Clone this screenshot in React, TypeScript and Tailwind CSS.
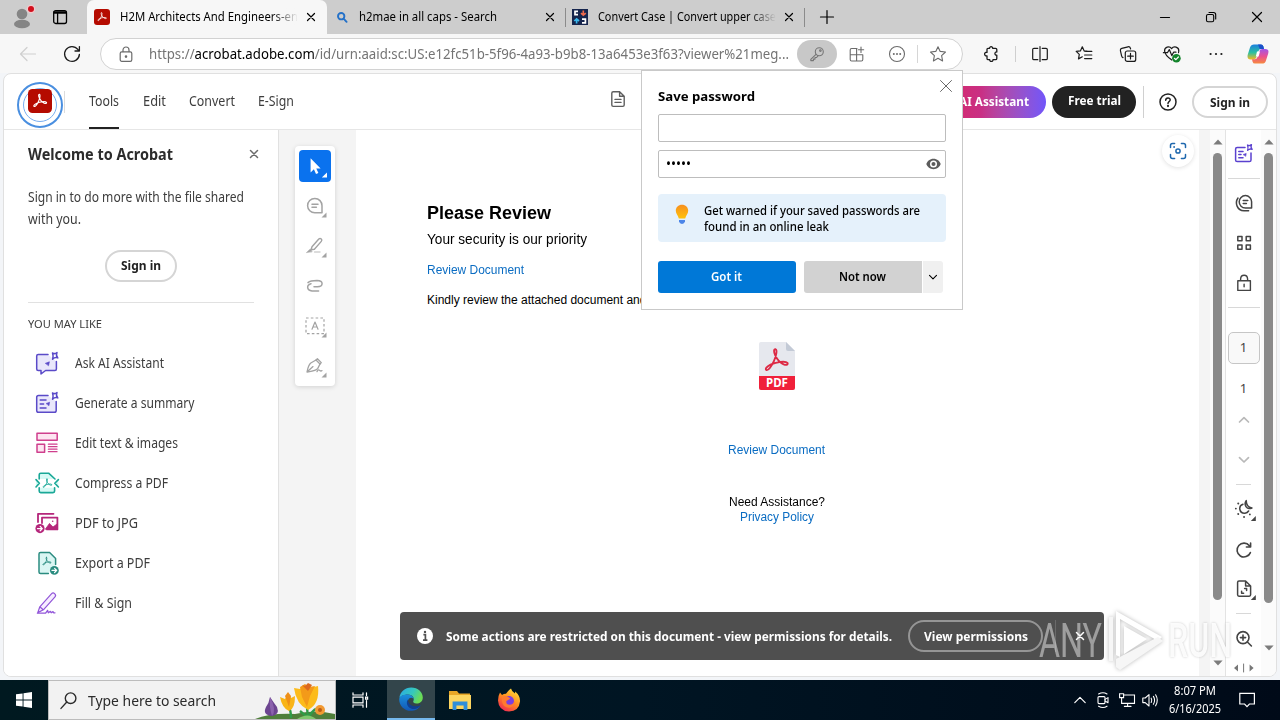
import { useLayoutEffect, useRef, useState } from "react";
import type { ReactNode } from "react";

const ui = "font-['Noto_Sans',sans-serif]";

/* Single-line label that is condensed or widened to an exact width. */
function Fit({ w, className = "", children }: { w: number; className?: string; children: ReactNode }) {
  const ref = useRef<HTMLSpanElement>(null);
  const [k, setK] = useState(1);
  useLayoutEffect(() => {
    const el = ref.current;
    if (!el) return;
    el.style.transform = "none";
    setK(w / el.getBoundingClientRect().width);
  }, [w]);
  return (
    <span className={`block shrink-0 whitespace-nowrap ${className}`} style={{ width: w }}>
      <span ref={ref} className="inline-block origin-left" style={{ transform: `scaleX(${k})` }}>
        {children}
      </span>
    </span>
  );
}

function Ic({ s = 20, c = "", sw = 1.2, children }: { s?: number; c?: string; sw?: number; children: ReactNode }) {
  return (
    <svg width={s} height={s} viewBox={`0 0 ${s} ${s}`} fill="none" stroke="currentColor" strokeWidth={sw} strokeLinecap="round" strokeLinejoin="round" className={`block shrink-0 overflow-visible ${c}`}>
      {children}
    </svg>
  );
}

const X = ({ s = 10, c = "", sw = 1.2 }: { s?: number; c?: string; sw?: number }) => (
  <Ic s={s} c={c} sw={sw}><path d={`M.5 .5L${s - 0.5} ${s - 0.5}M${s - 0.5} .5L.5 ${s - 0.5}`} /></Ic>
);

/* Three-lobed Acrobat mark on a 24 unit grid. */
const acro = "M11.3 3.6C9.6 3.2 9.8 6 11 8.6C12.4 11.6 14.7 14.5 17.8 15.8C20.4 16.8 21.6 15.7 20.8 14.6C19.4 12.8 12.2 13.8 7.6 15.8C4 17.4 2.6 19.6 3.8 20.3C5.4 21.2 8.2 17 10 13C11.6 9.4 12.9 4.1 11.3 3.6Z";

const AcroTile = ({ s }: { s: number }) => (
  <svg width={s} height={s} viewBox="0 0 24 24" className="block shrink-0">
    <rect width="24" height="24" rx="4.5" fill="#b50b00" />
    <g transform="translate(3.4 2.8) scale(.72)"><path d={acro} fill="none" stroke="#fff" strokeWidth="1.6" /></g>
  </svg>
);

function TabBar() {
  return (
    <div className="flex h-[34px] shrink-0 items-center bg-[#cdcdcd] text-black">
      <div className="flex w-[44px] justify-center">
        <Ic s={24} sw={0}>
          <circle cx="12" cy="9" r="5.3" fill="#858585" />
          <ellipse cx="12" cy="19" rx="8" ry="4.3" fill="#858585" />
          <circle cx="21" cy="4" r="4.3" fill="#f3c9cc" />
          <circle cx="21" cy="4" r="3" fill="#d1101d" />
        </Ic>
      </div>
      <div className="flex w-[43px] pl-[9px]">
        <Ic s={14} sw={1.3}><rect x=".7" y=".7" width="12.8" height="12.8" rx="2" /><path d="M1 3.2H13M1 2H13M4.6 4V13" /></Ic>
      </div>
      <div className="flex h-full w-[240px] items-center rounded-t-[7px] bg-[#f7f7f7] pl-[7px]">
        <AcroTile s={16} />
        <div className="relative ml-[10px]">
          <Fit w={178} className="text-[12px] leading-[18px]">H2M Architects And Engineers-en</Fit>
          <div className="absolute inset-y-0 right-0 w-[26px] bg-gradient-to-r from-transparent to-[#f7f7f7]" />
        </div>
        <X s={8} c="ml-[9px]" />
      </div>
      <div className="flex h-full w-[238px] items-center pl-[10px]">
        <Ic s={11} c="text-[#2471c8]" sw={1.9}><circle cx="4.2" cy="4.2" r="3.2" /><path d="M6.8 6.8L9.6 9.8" /></Ic>
        <Fit w={138} className="ml-[11px] text-[12px] leading-[18px]">h2mae in all caps - Search</Fit>
        <X s={8} c="ml-[49px]" />
      </div>
      <div className="h-[19px] w-px bg-[#8b8b8b]" />
      <div className="flex h-full w-[238px] items-center pl-[6px]">
        <svg width="16" height="16" viewBox="0 0 16 16" className="block shrink-0">
          <rect width="16" height="16" fill="#16254d" />
          <g fill="none" strokeWidth="1.7">
            <path d="M6 2.3H3V5.7H6" stroke="#fff" /><path d="M11.3 1.5V6M9 4.2L11.3 6.2L13.8 4.2" stroke="#ef6a4c" />
            <path d="M4.6 14.5V10M2.3 12L4.6 9.8L7 12" stroke="#3bb8ee" /><path d="M10 10.2H13.4V13.8H10" stroke="#fff" />
          </g>
        </svg>
        <div className="relative ml-[10px]">
          <Fit w={178} className="text-[12px] leading-[18px]">Convert Case | Convert upper case</Fit>
          <div className="absolute inset-y-0 right-0 w-[26px] bg-gradient-to-r from-transparent to-[#cdcdcd]" />
        </div>
        <X s={8} c="ml-[9px]" />
      </div>
      <div className="h-[19px] w-px bg-[#8b8b8b]" />
      <Ic s={14} c="ml-[15px]"><path d="M7 .5V13.5M.5 7H13.5" /></Ic>
      <div className="ml-auto flex">
        <div className="flex w-[46px] items-center justify-center"><Ic s={10}><path d="M.5 5.5H9.5" /></Ic></div>
        <div className="flex w-[46px] items-center justify-center"><Ic s={10} sw={1.1}><rect x=".5" y="2.5" width="7.2" height="7.2" rx="1.5" /><path d="M3 .5H7.5Q9.7 .5 9.7 2.7V7" /></Ic></div>
        <div className="flex w-[46px] items-center justify-center"><X s={10} /></div>
      </div>
    </div>
  );
}

const Slot = ({ children, w = "w-[44px]" }: { children: ReactNode; w?: string }) => (
  <div className={`flex shrink-0 items-center justify-center ${w}`}>{children}</div>
);

function AddressBar() {
  return (
    <div className="flex h-[39px] shrink-0 items-center bg-[#f7f7f7] pl-[6px] text-[#1b1b1b]">
      <Slot><Ic s={16} c="text-[#cfcfcf]"><path d="M15.5 8H.8M7 1.5L.5 8L7 14.5" /></Ic></Slot>
      <Slot><Ic s={18} sw={1.3}><path d="M16.4 9.4A7.4 7.4 0 1 1 14.8 4.4L16.2 6M16.4 1.6V6H12" /></Ic></Slot>
      <div className="ml-[6px] flex h-[32px] w-[863px] shrink-0 items-center rounded-full border border-[#d2d2d2] bg-white text-[#6b6b6b]">
        <Ic s={14} c="ml-[18px]"><rect x="1.2" y="4.8" width="11.6" height="9.6" rx="1.6" /><path d="M4 4.6V3A3 3 0 0 1 10 3V4.6" /><circle cx="7" cy="9.6" r=".7" fill="currentColor" /></Ic>
        <Fit w={640} className="ml-[16px] text-[13.5px] leading-[20px] text-[#747474]">
          https://<span className="text-black">acrobat.adobe.com</span>/id/urn:aaid:sc:US:e12fc51b-5f96-4a93-b9b8-13a6453e3f63?viewer%21meg...
        </Fit>
        <div className="ml-[8px] flex h-[28px] w-[40px] shrink-0 items-center justify-center rounded-full bg-[#c8c8c8]">
          <Ic s={14} c="text-[#767676]" sw={1.1}><circle cx="9.3" cy="4.7" r="4" /><circle cx="10.4" cy="3.6" r=".8" /><path d="M6 7.3L.8 12.3V13.6H3.4V12.1H5V10.5H6.6L8 8.8" /></Ic>
        </div>
        <Slot w="w-[40px]"><Ic s={16} sw={1.1}><path d="M8 2.5H2.6Q1.2 2.5 1.2 3.9V13.6Q1.2 15 2.6 15H12.4Q13.8 15 13.8 13.6V9M1.2 8.8H13.8M7.6 2.5V15M12 1V6.4M9.3 3.7H14.7" /></Ic></Slot>
        <Slot w="w-[40px]"><Ic s={16} sw={1.1}><circle cx="8" cy="8" r="7.5" /><g fill="currentColor" stroke="none"><circle cx="4.8" cy="8" r="1" /><circle cx="8" cy="8" r="1" /><circle cx="11.2" cy="8" r="1" /></g></Ic></Slot>
        <div className="h-[18px] w-px bg-[#d6d6d6]" />
        <Slot w="w-[40px]"><Ic s={16} sw={1.1}><path d="M8 .7L10.2 5.4L15.5 6L11.6 9.6L12.6 14.9L8 12.3L3.4 14.9L4.4 9.6L.5 6L5.8 5.4Z" /></Ic></Slot>
      </div>
      <div className="ml-[6px] flex items-center">
        <Slot><Ic s={16} sw={1.3}><path d="M5 2.3H6.6C6.3 .2 10 .2 9.7 2.3H12.6Q13.8 2.3 13.8 3.5V6C11.3 5.5 11.3 9.6 13.8 9.1V12.4Q13.8 13.6 12.6 13.6H10C10.3 15.9 6.4 15.9 6.7 13.6H5.2Q4 13.6 4 12.4V9.8C.8 10.3 .8 5.8 4 6.3V3.3Q4 2.3 5 2.3Z" /></Ic></Slot>
        <div className="mx-[2px] h-[16px] w-px bg-[#cfcfcf]" />
        <Slot><Ic s={16}><path d="M5.8 2.3H2Q.7 2.3 .7 3.6V12.4Q.7 13.7 2 13.7H5.8M10.2 2.3H14Q15.3 2.3 15.3 3.6V12.4Q15.3 13.7 14 13.7H10.2M8 .6V15.4" /></Ic></Slot>
        <Slot><Ic s={16}><path d="M8.6 5.2H11L8.2 4.9L6.3 .8L4.4 4.9L.2 5.4L3.3 8.4L2.5 12.9L6.3 10.8M9.8 5.4H15.8M8.6 9H15.8M8.6 12.6H15.8" /></Ic></Slot>
        <Slot><Ic s={16}><rect x="5.3" y="5" width="10.4" height="10.4" rx="2" /><path d="M10.5 7.4V13M7.7 10.2H13.3M3 11.6Q2 11.2 1.6 9.8L.4 4.6Q0 2.8 1.8 2.3L8 .8Q9.8 .4 10.4 2.2L10.6 3" /></Ic></Slot>
        <Slot><Ic s={18}><path d="M8.6 3.6C6.4 .6 1.2 2 1.6 6C1.8 9.6 5 12.4 8.8 15M8.6 3.6C10.8 .6 16 2 15.8 6L15.5 7.6M.4 7.7H4.4L6.3 4.6L8.8 10.6L10.6 7.2H13" /><circle cx="13.4" cy="13.2" r="4.3" fill="#13842b" stroke="none" /><path d="M11.4 13.3L12.9 14.7L15.4 12" stroke="#fff" /></Ic></Slot>
        <Slot><Ic s={14} sw={0}><g fill="currentColor"><circle cx="1.6" cy="7" r="1.1" /><circle cx="7" cy="7" r="1.1" /><circle cx="12.4" cy="7" r="1.1" /></g></Ic></Slot>
        <Slot w="w-[40px]">
          <svg width="22" height="20" viewBox="0 0 22 20" className="block">
            <defs>
              <linearGradient id="cpA" x1="0" y1="0" x2="0" y2="1"><stop offset="0" stopColor="#1a7fe0" /><stop offset=".55" stopColor="#2cc0a0" /><stop offset="1" stopColor="#f5b921" /></linearGradient>
              <linearGradient id="cpB" x1="0" y1="0" x2="0" y2="1"><stop offset="0" stopColor="#a156e8" /><stop offset=".5" stopColor="#ea5092" /><stop offset="1" stopColor="#f78a3c" /></linearGradient>
            </defs>
            <path d="M7 .4H14Q15.8 .4 16.4 2.6L17 5H14Q12 5 11.3 7.4L9.6 13Q8.8 15.4 6.6 15.4H3.6Q-.4 15.4 .8 10.6L3 3.6Q4 .4 7 .4Z" fill="url(#cpA)" />
            <path d="M11 .4H14Q15.8 .4 16.4 2.6L17 5H12.8Z" fill="#1b50c9" />
            <path d="M15 19.6H8Q6 19.6 5.5 17.4L5 15.2H8Q10 15.2 10.8 12.6L12.4 7Q13.1 5 15.4 5H18.4Q22.4 5 21.2 9.4L19 16.4Q18 19.6 15 19.6Z" fill="url(#cpB)" />
            <path d="M10 7.6H13L11.6 12.6H8.8Z" fill="#fff" />
          </svg>
        </Slot>
      </div>
    </div>
  );
}

function AppHeader() {
  const t = `text-[13.5px] leading-[20px] text-[#3d3d3d] ${ui}`;
  return (
    <div className="flex h-[56px] shrink-0 border-b border-[#e6e6e6]">
      <div className="ml-[13px] mt-[8px] flex size-[46px] shrink-0 items-center justify-center rounded-full border-2 border-[#4a8fe0]">
        <div className="flex size-[34px] shrink-0 items-start justify-center rounded-full border border-[#79aef0]"><AcroTile s={24} /></div>
      </div>
      <div className="ml-px mt-[17px] h-[22px] w-px bg-[#dcdcdc]" />
      <div className="ml-[24px] flex w-[30px] flex-col justify-between pt-[17px]">
        <Fit w={30} className={t}>Tools</Fit>
        <div className="h-[2px] bg-[#222]" />
      </div>
      <div className="flex gap-[23px] pl-[24px] pt-[17px]">
        <Fit w={23} className={t}>Edit</Fit>
        <Fit w={46} className={t}>Convert</Fit>
        <Fit w={36} className={t}>E-Sign</Fit>
      </div>
      <Ic s={16} c="ml-[316px] mt-[17px] text-[#5e5e5e]" sw={1.4}><path d="M9.6 .8H3.2Q1.8 .8 1.8 2.2V14Q1.8 15.4 3.2 15.4H12.8Q14.2 15.4 14.2 14V5.2ZM9.6 .8V5.2H14.2M5 8.4H11M5 11.4H11" /></Ic>
      <div className="ml-auto flex items-center pr-[8px]">
        <div className={`flex h-[32px] w-[130px] items-center justify-end rounded-full bg-gradient-to-r from-[#e31b4c] via-[#c92f84] to-[#7155fa] pb-px pr-[17px] text-[13px] font-bold leading-[20px] text-white ${ui}`}><Fit w={70}>AI Assistant</Fit></div>
        <div className={`ml-[6px] flex h-[32px] w-[84px] items-center justify-center rounded-full bg-[#222] pb-[3px] text-[13px] font-bold leading-[20px] text-white ${ui}`}><Fit w={53}>Free trial</Fit></div>
        <div className="ml-[7px] h-[32px] w-px bg-[#d0d0d0]" />
        <Ic s={18} c="ml-[15px] text-[#222]" sw={1.5}><circle cx="9" cy="9" r="8" /><path d="M6.7 7.2C6.8 4 11.4 4.4 11.2 7C11 8.7 9 8.6 9 10.4" /><circle cx="9" cy="13" r=".4" fill="currentColor" /></Ic>
        <div className={`ml-[15px] flex h-[32px] w-[76px] items-center justify-center rounded-full border-2 border-[#d5d5d5] text-[13px] font-bold leading-[20px] text-[#222] ${ui}`}><Fit w={40}>Sign in</Fit></div>
      </div>
    </div>
  );
}

const star = "M16.5 1.5Q18.8 3 21 1Q19.6 3.8 21.8 6.4Q19 5.2 16.6 7.6Q17.6 4.2 16.5 1.5Z";

const tools: { label: string; w: number; icon: ReactNode }[] = [
  { label: "Ask AI Assistant", w: 89, icon: <Ic s={24} c="text-[#5a4ac8]" sw={1.5}><path d="M13 3.5H3.2Q1.7 3.5 1.7 5V18Q1.7 19.5 3.2 19.5H6V23L10.6 19.5H20Q21.4 19.5 21.4 18V10.5" fill="#e9e7fb" /><path d={star} transform="translate(1 .5)" /><path d="M10.6 12.2L14.4 10.8L13.6 14.4Z" fill="currentColor" strokeWidth=".6" /></Ic> },
  { label: "Generate a summary", w: 119.5, icon: <Ic s={24} c="text-[#5a4ac8]" sw={1.5}><path d="M13 4.5H3.5Q1.7 4.5 1.7 6.3V19.5Q1.7 21.3 3.5 21.3H19.4Q21.2 21.3 21.2 19.5V10.5" fill="#e9e7fb" /><path d={star} transform="translate(1 .5)" /><path d="M5.2 9H11M5.2 13H8.6M5.2 17H11" /><path d="M11.4 12.4L14.6 11.2L14 14.4Z" fill="currentColor" strokeWidth=".6" /></Ic> },
  { label: "Edit text & images", w: 103, icon: <Ic s={24} c="text-[#cf3f8d]" sw={1.5}><path d="M2 2.2H22.2V9.2H2Z" fill="#fde5f1" /><path d="M2 13.2H9.6V21.2H2Z" fill="#fde5f1" /><path d="M13.4 13.2H22M13.4 15.7H22M13.4 18.2H22M13.4 20.7H22" strokeWidth="1.3" /></Ic> },
  { label: "Compress a PDF", w: 93, icon: <Ic s={24} c="text-[#1aa897]" sw={1.6}><path d="M4.2 8V3.7Q4.2 2.2 5.7 2.2H13.6L20 8M4.2 16.8V20Q4.2 21.6 5.7 21.6H18Q19.6 21.6 19.6 20V16.8M1 8.6L4.4 12.2L1 16M23.4 8.6L19.8 12.2L23.4 16" fill="#d6faf5" /><g transform="translate(6.4 6.2) scale(.5)"><path d={acro} strokeWidth="1.8" /></g></Ic> },
  { label: "PDF to JPG", w: 63, icon: <Ic s={24} c="text-[#b5267b]" sw={1.8}><path d="M3 11V2.8H18.5M7 12V6.6H22.4V18.4H12" /><path d="M10.5 18L14.5 12.4L18 16L22 13V18Z" fill="currentColor" strokeWidth=".8" /><circle cx="17.7" cy="10.2" r=".8" fill="currentColor" stroke="none" /><circle cx="5" cy="17.6" r="4.6" fill="currentColor" stroke="none" /><path d="M2.5 17.6H7.2M5.2 15.4L7.3 17.6L5.2 19.8" stroke="#fff" strokeWidth="1.3" /></Ic> },
  { label: "Export a PDF", w: 75, icon: <Ic s={24} c="text-[#2b8c80]" sw={1.5}><path d="M13.4 22.4H5.5Q4 22.4 4 20.9V3Q4 1.5 5.5 1.5H14.6L20.6 7.5V13.4" fill="#daf6f3" /><g transform="translate(6.4 4.6) scale(.46)"><path d={acro} strokeWidth="2" /></g><circle cx="19.4" cy="19.4" r="4.4" fill="currentColor" stroke="none" /><path d="M17 19.4H21.5M19.6 17.3L21.7 19.4L19.6 21.5" stroke="#fff" strokeWidth="1.2" /></Ic> },
  { label: "Fill & Sign", w: 57, icon: <Ic s={24} c="text-[#9256d9]" sw={1.2}><path d="M2.8 21.6L4.8 15.8L16.4 2.8Q18 1.2 19.6 2.6Q21.4 4.2 20 5.8L8.4 18.8ZM4.8 15.8L8.2 18.8" fill="#f6edff" /><path d="M2.4 22.2H10.6L12.6 19.4L13.3 21.8L15.4 20.4L16.2 21.8L18 20.6L18.6 21.8H20" strokeWidth="1.3" /></Ic> },
];

function LeftPanel() {
  return (
    <div className={`flex w-[275px] shrink-0 flex-col border-r border-[#e1e1e1] bg-white pl-[24px] text-[#3d3d3d] ${ui}`}>
      <div className="mt-[13px] flex items-center">
        <Fit w={145} className="text-[15.5px] font-bold leading-[22px] text-[#2c2c2c]">Welcome to Acrobat</Fit>
        <X s={8} c="ml-[77px] text-[#6a6a6a]" sw={1.5} />
      </div>
      <div className="mt-[21px] text-[13.5px] leading-[22px]">
        <Fit w={216}>Sign in to do more with the file shared</Fit>
        <Fit w={53}>with you.</Fit>
      </div>
      <div className="ml-[77px] mt-[20px] flex h-[32px] w-[72px] shrink-0 items-center justify-center rounded-full border-2 border-[#d5d5d5] pb-[2px] text-[13px] font-bold leading-[20px] text-[#222]"><Fit w={40}>Sign in</Fit></div>
      <div className="mt-[20px] h-px w-[226px] shrink-0 bg-[#e1e1e1]" />
      <Fit w={74} className="mt-[13px] text-[11px] leading-[16px]">YOU MAY LIKE</Fit>
      <div className="mt-[11px]">
        {tools.map((t) => (
          <div key={t.label} className="flex h-[40px] items-center pl-[7px]">
            {t.icon}
            <Fit w={t.w} className="ml-[16px] text-[13.5px] leading-[20px]">{t.label}</Fit>
          </div>
        ))}
      </div>
    </div>
  );
}

const corner = <path d="M21.5 16.5V21.5H16.5Z" fill="currentColor" stroke="none" />;

function QuickTools() {
  const icons: ReactNode[] = [
    <Ic s={20} sw={1.5}><path d="M17 16.8H10A7.2 7.2 0 1 1 17 9.8ZM7 8.2H13M7 11.2H11.4" />{corner}</Ic>,
    <Ic s={20} sw={1.4}><path d="M7 10.8L13.8 3Q15.1 1.9 16.3 3Q17.4 4.1 16.3 5.4L9.4 13.2L6 13.8Z" /><path d="M1.6 16.4L5.2 13L7 15.6Z" fill="currentColor" strokeWidth=".5" /><path d="M9.5 16H15" strokeOpacity=".5" />{corner}</Ic>,
    <Ic s={20} sw={1.5}><path d="M3 6.6C5 4.9 8 4.6 12 4.6C19 4.9 18.4 10.4 12.4 10.7H9M6 7.8C1.2 9 1.6 14.6 7 15H13.6" /></Ic>,
    <Ic s={20} sw={1.2}><path d="M1 2H19V17.6H1Z" strokeDasharray="2.6 2.2" strokeLinecap="butt" /><path d="M7 13.2L10 6L13 13.2M8 11H12" />{corner}</Ic>,
    <Ic s={20} sw={1.3}><path d="M2 16C2.8 12 3.4 8.8 5.8 7L11 4L15 8L12.8 12.4C11 15 6 15.4 2 16L8 10.6" /><path d="M11 4L12.4 2.8L16.3 6.6L15 8M12 15.6C14.4 11.6 14.6 16.4 17 14.6" />{corner}</Ic>,
  ];
  return (
    <div className="mt-[16px] flex h-[240px] w-[40px] flex-col items-center rounded-[4px] bg-white pt-[4px] text-[#a3a3a3] shadow-[0_1px_5px_rgba(0,0,0,0.14)]">
      <div className="flex size-[32px] shrink-0 items-center justify-center rounded-[4px] bg-[#0a72ee] text-white">
        <Ic s={20} sw={0}><path d="M5.6 2.2V16.4L8.9 13.2L11 18L13.4 17L11.3 12.4H15.6Z" fill="#fff" /><path d="M22 16.4V21.6H16.8Z" fill="#fff" /></Ic>
      </div>
      <div className="flex flex-col gap-[20px] pt-[14px]">
        {icons.map((i, n) => <div key={n}>{i}</div>)}
      </div>
    </div>
  );
}

function Doc() {
  return (
    <div className="flex w-[843px] shrink-0 flex-col bg-white font-['Liberation_Sans',sans-serif] text-[12px] leading-[15px] text-black">
      <div className="flex justify-between">
        <div className="pl-[71px] pt-[72px]">
          <Fit w={124} className="text-[18px] font-bold leading-[22px]">Please Review</Fit>
          <Fit w={160} className="mt-[7px] text-[14px] leading-[16px]">Your security is our priority</Fit>
          <Fit w={97} className="mt-[16px] text-[#0a6cc2]">Review Document</Fit>
          <p className="mt-[15px] whitespace-nowrap">Kindly review the attached document and</p>
        </div>
        <div className="mr-[5px] mt-[5px] flex size-[32px] items-center justify-center rounded-full bg-white shadow-[0_1px_4px_rgba(0,0,0,0.12)]">
          <Ic s={18} c="text-[#1f68ae]" sw={1.5}><path d="M5.6 1.5H3.5Q1.5 1.5 1.5 3.5V5.6M12.4 1.5H14.5Q16.5 1.5 16.5 3.5V5.6M5.6 16.5H3.5Q1.5 16.5 1.5 14.5V12.4M12.4 16.5H14.5Q16.5 16.5 16.5 14.5V12.4" /><circle cx="9" cy="9" r="2.1" /><circle cx="5" cy="5" r=".4" fill="currentColor" strokeWidth="1" /></Ic>
        </div>
      </div>
      <div className="mt-[34px] flex flex-col items-center pr-[2px]">
        <svg width="36" height="48" viewBox="0 0 36 48" className="block">
          <path d="M2 0H27L36 9V46Q36 48 34 48H2Q0 48 0 46V2Q0 0 2 0Z" fill="#e6e8ee" />
          <path d="M27 0L36 9H29Q27 9 27 7Z" fill="#c3cad6" />
          <path d="M0 34H36V46Q36 48 34 48H2Q0 48 0 46Z" fill="#f0203a" />
          <g transform="translate(2.6 2.8) scale(1.24)"><path d={acro} fill="none" stroke="#dd2a45" strokeWidth="1.5" /></g>
          <text x="18" y="45" textAnchor="middle" fontFamily="Noto Sans" fontWeight="700" fontSize="11.5" fill="#fff">PDF</text>
        </svg>
        <Fit w={97} className="mt-[53px] text-[#0a6cc2]">Review Document</Fit>
        <Fit w={96} className="mt-[37px]">Need Assistance?</Fit>
        <Fit w={74} className="text-[#0a6cc2]">Privacy Policy</Fit>
      </div>
    </div>
  );
}

const Tri = ({ d }: { d: string }) => (
  <svg width="10" height="6" viewBox="0 0 10 6" className="block shrink-0"><path d={d} fill="#7c7c7c" /></svg>
);

function ScrollBar({ thumb, tail, cls }: { thumb: string; tail: string; cls: string }) {
  return (
    <div className={`flex shrink-0 flex-col items-center bg-[#fbfbfb] pt-[9px] ${cls}`}>
      <Tri d="M.4 5.6L5 .4L9.6 5.6Z" />
      <div className={`mt-[8px] w-[9px] shrink-0 rounded-full bg-[#8a8a8a] ${thumb}`} />
      <div className={tail}><Tri d="M.4 .4L5 5.6L9.6 .4Z" /></div>
    </div>
  );
}

function Rail() {
  return (
    <div className={`flex w-[36px] shrink-0 flex-col items-center border-l border-[#e3e3e3] bg-white text-[13px] text-[#444] ${ui}`}>
      <div className="flex h-[48px] shrink-0 items-center"><Ic s={20} c="text-[#5a41cf]" sw={1.5}><path d="M11 3.5H3.2Q1.6 3.5 1.6 5.1V16Q1.6 17.6 3.2 17.6H15.4Q17 17.6 17 16V9" /><path d={star} transform="translate(-1 -.3) scale(.88)" /><path d="M4.8 7.4H9M4.8 10.6H7M4.8 13.8H9" /><path d="M9.4 10.4L12.2 9.4L11.8 12Z" fill="currentColor" strokeWidth=".6" /></Ic></div>
      <div className="h-px w-[32px] shrink-0 bg-[#d8d8d8]" />
      <div className="flex h-[128px] shrink-0 flex-col items-center justify-center gap-[20px]">
        <Ic s={20} sw={1.5}><path d="M17.6 15H11.4A6.2 6.2 0 1 1 17.6 8.8ZM9.2 7.6H13.8M9.2 10.4H12.4M4 5C.6 9.8 3 17.6 10 17.8H14.6" /></Ic>
        <Ic s={20} sw={1.5}><path d="M3.8 3.6H8V7.8H3.8ZM12.2 3.6H16.4V7.8H12.2ZM3.8 12H8V16.2H3.8ZM12.2 12H16.4V16.2H12.2Z" /></Ic>
        <Ic s={20} sw={1.4}><path d="M3.8 7.8H16.4V17.4H3.8ZM6.6 7.6V6Q6.8 2.2 10.1 2.2Q13.4 2.2 13.6 6V7.6M10.1 11.2V13.8" /></Ic>
      </div>
      <div className="h-px w-[32px] shrink-0 bg-[#d8d8d8]" />
      <div className="mt-[24px] flex size-[32px] shrink-0 items-center justify-center rounded-[5px] border border-[#c6c6c6] bg-[#f9f9f9]">1</div>
      <div className="mt-[14px] leading-[20px]">1</div>
      <Ic s={12} c="mt-[15px] text-[#b9b9b9]" sw={1.7}><path d="M1.5 9L6 4.6L10.5 9" /></Ic>
      <Ic s={12} c="mt-[29px] text-[#b9b9b9]" sw={1.7}><path d="M1.5 3.6L6 8L10.5 3.6" /></Ic>
      <div className="mt-[18px] h-px w-[15px] shrink-0 bg-[#d8d8d8]" />
      <Ic s={20} c="mt-[14px]" sw={1.5}><path d="M9 5.2C3.8 7 5.2 14.6 11 14.2Q13.4 14 14.6 12M12.2 1.6C9.6 5.6 12.2 11 18 9C13.6 8.4 12.2 6 12.2 1.6Z" /><path d="M4.2 4.4L4.3 4.5M1.8 9.6H1.9M4.2 15L4.3 15.1M10 18H10.1M15.8 15.4H15.9" strokeWidth="1.8" /><path d="M21.8 17V22H16.8Z" fill="currentColor" stroke="none" /></Ic>
      <Ic s={20} c="mt-[21px]" sw={1.6}><path d="M16.4 12.6A6.9 6.9 0 1 1 15.4 5.8M16.6 3V7H12.4" /></Ic>
      <Ic s={20} c="mt-[19px]" sw={1.5}><path d="M11.6 2H5Q3.6 2 3.6 3.4V15.8Q3.6 17.2 5 17.2H15.2Q16.6 17.2 16.6 15.8V7ZM11.6 2V7H16.6M12.6 9.6H10.6M12.6 9.6V11.6M7.6 14.2V12.2M7.6 14.2H9.6" /><path d="M21.8 16V21H16.8Z" fill="currentColor" stroke="none" /></Ic>
      <div className="mt-[14px] h-px w-[15px] shrink-0 bg-[#d8d8d8]" />
      <Ic s={20} c="mt-[15px]" sw={1.6}><circle cx="9" cy="8.6" r="6" /><path d="M13.4 13L17.4 17M9 6V11.2M6.4 8.6H11.6" /></Ic>
      <Ic s={20} c="mt-[10px] text-[#777]" sw={1}><path d="M4 5.4V12.6L0 9ZM15.6 5.4V12.6L19.6 9Z" fill="currentColor" stroke="none" /><path d="M9.6 5V13" /></Ic>
    </div>
  );
}

function PasswordDialog() {
  return (
    <div className={`absolute left-[641px] top-[70px] flex h-[240px] w-[322px] flex-col border border-[#c9c9c9] bg-white px-[16px] text-black ${ui}`}>
      <div className="flex h-[43px] shrink-0 pt-[15px]">
        <Fit w={97} className="text-[13px] font-bold leading-[20px]">Save password</Fit>
        <X s={12} c="-mt-[6px] -mr-[6px] ml-auto text-[#6a6a6a]" sw={1} />
      </div>
      <div className="h-[28px] w-[288px] shrink-0 rounded-[2px] border border-[#bdbdbd]" />
      <div className="mt-[8px] flex h-[28px] w-[288px] shrink-0 items-center justify-between rounded-[2px] border border-[#bdbdbd] pl-[7px] pr-[4px]">
        <Fit w={25} className="text-[14px] leading-[20px]">•••••</Fit>
        <svg width="15" height="12" viewBox="0 0 15 12" className="block"><path d="M7.5 .8C3.9 .8 1.3 3.2 .3 6C1.3 8.8 3.9 11.2 7.5 11.2C11.1 11.2 13.7 8.8 14.7 6C13.7 3.2 11.1 .8 7.5 .8Z" fill="#5c5c5c" /><circle cx="7.5" cy="6" r="3.5" fill="#fff" /><circle cx="7.5" cy="6" r="2" fill="#5c5c5c" /></svg>
      </div>
      <div className="mt-[16px] flex h-[48px] w-[288px] shrink-0 rounded-[4px] bg-[#e5f1fb] pl-[17px] pt-[9px]">
        <svg width="14" height="21" viewBox="0 0 14 21" className="mt-px block">
          <defs><linearGradient id="bulb" x1="0" y1="0" x2="0" y2="1"><stop offset="0" stopColor="#f78f1e" /><stop offset="1" stopColor="#ffc20a" /></linearGradient></defs>
          <path d="M7 .8C3.4 .8 .8 3.4 .8 6.8C.8 9.8 3 11.2 3.8 14.6H10.2C11 11.2 13.2 9.8 13.2 6.8C13.2 3.4 10.6 .8 7 .8Z" fill="url(#bulb)" />
          <path d="M4 16H10V17.6Q9.4 20 7 20Q4.6 20 4 17.6Z" fill="#4d86e8" />
        </svg>
        <div className="ml-[15px] text-[12px] font-medium leading-[16px]">
          <Fit w={216}>Get warned if your saved passwords are</Fit>
          <Fit w={125}>found in an online leak</Fit>
        </div>
      </div>
      <div className="mt-[19px] flex text-[12px] font-semibold leading-[18px]">
        <div className="flex h-[32px] w-[138px] items-center justify-center rounded-[3px] bg-[#0078d7] pr-[2px] text-white"><Fit w={31}>Got it</Fit></div>
        <div className="ml-[8px] flex h-[32px] w-[118px] items-center justify-center rounded-l-[3px] bg-[#d2d2d2] pr-[2px]"><Fit w={47}>Not now</Fit></div>
        <div className="ml-px flex h-[32px] w-[20px] items-center justify-center rounded-r-[3px] bg-[#f0f0f0]"><Ic s={8} sw={1.1}><path d="M.5 2.4L4 5.9L7.5 2.4" /></Ic></div>
      </div>
    </div>
  );
}

function Toast() {
  return (
    <div className={`absolute left-[400px] top-[612px] flex h-[48px] w-[704px] items-center rounded-[4px] bg-[#4f4f4f] text-[13px] font-bold leading-[20px] text-white ${ui}`}>
      <svg width="16" height="16" viewBox="0 0 16 16" className="ml-[17px] block shrink-0"><circle cx="8" cy="8" r="8" fill="#fff" /><path d="M6.4 6.6H8.4V12M6 12.2H10.4" stroke="#4f4f4f" strokeWidth="1.7" fill="none" /><circle cx="8" cy="3.9" r="1.2" fill="#4f4f4f" /></svg>
      <Fit w={446} className="ml-[13px] pb-px">Some actions are restricted on this document - view permissions for details.</Fit>
      <div className="ml-[16px] flex h-[32px] w-[135px] shrink-0 items-center justify-center rounded-full border-2 border-[#959595] pb-px"><Fit w={104}>View permissions</Fit></div>
      <div className="ml-[12px] h-[32px] w-px bg-[#6a6a6a]" />
      <X s={8} c="ml-[20px]" sw={1.5} />
    </div>
  );
}

function Watermark() {
  return (
    <div className="absolute left-[1039px] top-[608px] flex h-[66px] w-[196px] items-center font-['Roboto',sans-serif] text-[48px] leading-[66px]">
      <Fit w={63} className="text-white/45">ANY</Fit>
      <svg width="62" height="64" viewBox="0 0 62 64" className="ml-[4px] block shrink-0 drop-shadow-[0_0_2px_rgba(0,0,0,0.28)]">
        <path d="M5 8V52" stroke="#f6f6f6" strokeWidth="4" />
        <path d="M10 2L56 28L52 32L14 10V48L10 46Z" fill="#fff" />
        <path d="M10 50L52 28L57 32L14 61L10 58Z" fill="#f6f6f6" />
        <path d="M18 17V45L41 30Z" fill="#fff" />
      </svg>
      <Fit w={64} className="font-medium text-white/90 [text-shadow:0_0_3px_rgba(0,0,0,0.22)]">RUN</Fit>
    </div>
  );
}

function Taskbar() {
  return (
    <div className={`mt-auto flex h-[40px] shrink-0 items-center bg-gradient-to-r from-[#001920] via-[#001523] to-[#000a18] text-white ${ui}`}>
      <div className="flex w-[48px] justify-center">
        <svg width="16" height="16" viewBox="0 0 16 16"><path d="M0 2.3L6.6 1.4V7.5H0ZM7.5 1.2L16 0V7.5H7.5ZM0 8.4H6.6V14.6L0 13.7ZM7.5 8.4H16V16L7.5 14.8Z" fill="#fff" /></svg>
      </div>
      <div className="flex h-[40px] w-[288px] items-center overflow-hidden border border-[#bcbcbc] bg-[#f2f2f2] text-[#2b2b2b]">
        <Ic s={17} c="ml-[11px]" sw={1.4}><circle cx="10.6" cy="6.2" r="5.3" /><path d="M6.8 10L1 16.4" /></Ic>
        <Fit w={128} className="ml-[11px] text-[15px] leading-[20px]">Type here to search</Fit>
        <svg width="80" height="38" viewBox="0 0 80 38" className="ml-auto block shrink-0">
          <path d="M0 38Q14 32 40 33Q60 28 80 33V38Z" fill="#4f7f3b" />
          <path d="M15 16Q19 22 22 26Q25 34 17 35Q7 34 11 26Q14 22 15 16Z" fill="#6c4590" /><path d="M15 16Q14 26 17 35Q22 29 15 16Z" fill="#8b62ad" />
          <path d="M36 37Q36 29 33 24M53 37Q52 28 52 22M45 30Q50 34 53 37Q58 29 61 28" stroke="#2f9a47" strokeWidth="2.4" fill="none" />
          <path d="M25 16L30 18L33 13L36 17L40 15Q40 28 34 30Q27 27 25 16Z" fill="#f9b417" /><path d="M30 15L33 11L36 15L34 26Z" fill="#ee8f18" />
          <path d="M39 7L45 8L50 4L55 7L63 5Q65 23 53 29Q41 23 39 7Z" fill="#fcbb1b" /><path d="M45 6L50 3L54 6L60 5L55 15L52 26L47 16Z" fill="#f39a19" /><path d="M47 4L50 5L53 2L57 4L53 10Z" fill="#dd6a1f" />
          <circle cx="65" cy="29" r="5" fill="#f29a33" /><circle cx="65" cy="29" r="2" fill="#b95c17" />
          <path d="M42 38Q53 31 61 38Z" fill="#7fc76d" />
        </svg>
      </div>
      <div className="mr-[3px] flex w-[48px] shrink-0 justify-center"><Ic s={16} sw={1.2}><path d="M1 .8V3H11V.8M1 15.2V13H11V15.2M1 5.2H11V10.8H1ZM14.5 .8V3.4M14.5 8.6V15.2M13.6 5.2H15.6V7.2H13.6Z" strokeLinejoin="miter" /></Ic></div>
      <div className="flex h-[40px] w-[48px] shrink-0 flex-col items-center justify-between border-b-2 border-[#76b9ed] bg-[#33454b] pt-[7px]">
        <svg width="24" height="24" viewBox="0 0 24 24">
          <defs>
            <linearGradient id="eg" x1="0" y1="0" x2="1" y2=".4"><stop offset="0" stopColor="#2aa8e8" /><stop offset=".6" stopColor="#35c8bd" /><stop offset="1" stopColor="#6bdc55" /></linearGradient>
            <linearGradient id="eb" x1="0" y1="0" x2="0" y2="1"><stop offset="0" stopColor="#1b8fdc" /><stop offset="1" stopColor="#1257b5" /></linearGradient>
          </defs>
          <path d="M.4 11C1 4.6 6 .4 12.2 .4C19 .4 23.8 5.2 23.8 10.4C23.8 14.4 20.6 16.4 17.6 16.4C14.6 16.4 13.6 15 14.4 14C15.8 11.4 13.6 7.6 9 7.6C4.4 7.6 .8 10 .4 11Z" fill="url(#eg)" />
          <path d="M.2 12.4C.2 9 4.6 7.4 8.8 7.6C12.6 7.8 14.4 10 14.8 12C11 8.6 7.6 13 9.4 17C11.4 21 16.4 22 21.6 18.4C19 22.4 15.6 23.8 12 23.8C5 23.8 .2 18.4 .2 12.4Z" fill="url(#eb)" />
          <path d="M8.6 12.4C6 17.6 10.6 22.8 16 22C18.4 21.6 20.4 20.2 21.8 18.2C16 21 9.6 18.6 8.6 12.4Z" fill="#103f91" />
        </svg>
      </div>
      <Slot w="w-[50px]">
        <svg width="22" height="19" viewBox="0 0 22 19"><path d="M0 0H8L10 2.4H21V18H0Z" fill="#e8a727" /><path d="M0 4H22V18H0Z" fill="#fcd560" /><path d="M3.6 19V10.6H18.4V19H14.6V14.6H7.4V19Z" fill="#2f8edb" /></svg>
      </Slot>
      <Slot w="w-[48px]">
        <svg width="24" height="24" viewBox="0 0 24 24">
          <defs><linearGradient id="ff" x1=".8" y1="0" x2=".2" y2="1"><stop offset="0" stopColor="#ffe23e" /><stop offset=".5" stopColor="#ff8b1e" /><stop offset="1" stopColor="#ef2358" /></linearGradient></defs>
          <path d="M3 4.6L5 7Q7 5.6 9 5.8Q11 2.4 14 .4Q14.6 3.4 18 5.4L18.2 3.6Q23.4 8 23 13.6Q22 23.4 12 23.6Q1.6 23 1 12.6Q1 8 3 4.6Z" fill="url(#ff)" />
          <circle cx="12" cy="13" r="5" fill="#7a3fe0" /><path d="M5 9Q8.4 7 12 9.4Q14 10.4 12 11.6L9.4 13Q8.8 16.4 12.4 16.8Q16.4 16.6 17.6 13Q18.4 18.8 12.4 19.8Q5.6 19.6 5 13Z" fill="#ff7a30" />
        </svg>
      </Slot>
      <div className="ml-auto flex items-center">
        <Ic s={12}><path d="M.8 8.6L6 3.4L11.2 8.6" /></Ic>
        <Ic s={16} c="ml-[9px]" sw={1.1}><rect x="3" y="4.6" width="7" height="7" rx="1" /><path d="M10 7.4L13 5.6V10.8L10 9M3.6 2Q8 -.6 12 2M3.6 14.2Q8 16.8 12 14.2" /></Ic>
        <Ic s={16} c="ml-[8px]" sw={1.1}><path d="M5 3H15.5V11.4H3M8.6 11.4V14.4M5.4 14.4H12M.6 1.8H4.6V5.6H.6ZM2.6 5.6V11.4" strokeLinejoin="miter" /></Ic>
        <Ic s={17} c="ml-[7px]" sw={1.1}><path d="M.8 6H3.2L7 2.6V14L3.2 10.6H.8ZM9.2 6.2Q10.4 8.3 9.2 10.4M11.4 4.4Q13.8 8.3 11.4 12.2M13.6 2.8Q17 8.3 13.6 13.8" /></Ic>
        <div className="ml-[9px] flex w-[54px] flex-col items-center text-[12px] leading-[18px]">
          <Fit w={42}>8:07 PM</Fit>
          <Fit w={52}>6/16/2025</Fit>
        </div>
        <Ic s={16} c="ml-[17px] mr-[25px]"><path d="M.8 1.4H15.4V12H10.4L8 14.6L5.6 12H.8Z" strokeLinejoin="miter" /></Ic>
      </div>
    </div>
  );
}

export default function App() {
  return (
    <div className={`relative flex h-[720px] w-[1280px] flex-col overflow-hidden bg-[#f3f5f8] ${ui}`}>
      <TabBar />
      <AddressBar />
      <div className="mx-[3px] flex h-[604px] shrink-0 flex-col overflow-hidden rounded-[8px] border border-[#e0e0e0] bg-white">
        <AppHeader />
        <div className="flex min-h-0 flex-1">
          <LeftPanel />
          <div className="flex w-[77px] shrink-0 bg-[#f4f4f4] pl-[16px]"><QuickTools /></div>
          <Doc />
          <div className="w-[11px] shrink-0 bg-[#f4f4f4]" />
          <ScrollBar cls="w-[15px]" thumb="h-[447px]" tail="mt-[60px]" />
          <Rail />
          <ScrollBar cls="w-[15px]" thumb="h-[450px]" tail="mt-[42px]" />
        </div>
      </div>
      <Taskbar />
      <PasswordDialog />
      <Toast />
      <Watermark />
    </div>
  );
}
